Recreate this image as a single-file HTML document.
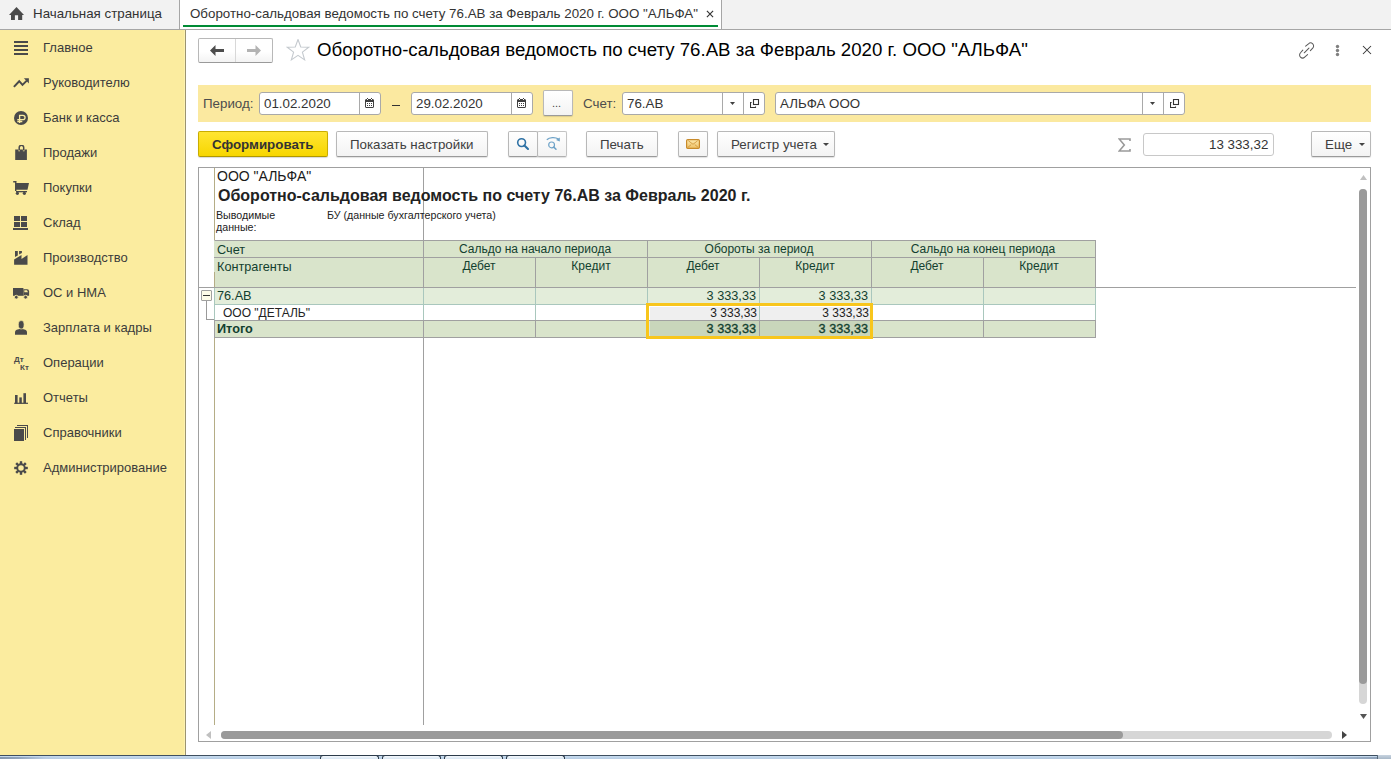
<!DOCTYPE html>
<html><head><meta charset="utf-8">
<style>
*{box-sizing:border-box;margin:0;padding:0}
html,body{width:1391px;height:759px;overflow:hidden;background:#fff;font-family:"Liberation Sans",sans-serif;color:#333}
.a{position:absolute}
.t{position:absolute;white-space:pre;line-height:15px}
/* tabs */
#tabbar{left:0;top:0;width:1391px;height:30px;background:#f2f2f2;border-bottom:1px solid #a6a6a6}
/* sidebar */
#side{left:0;top:30px;width:186px;height:725px;background:#fbec9f;border-right:1px solid #9c9470;box-shadow:inset -1px 0 0 #fdf2b0}
.si{position:absolute;left:43px;font-size:13px;color:#3c3c3c;line-height:15px;white-space:pre}
.ic{position:absolute;left:12px;width:18px;height:18px}
/* buttons */
.btn{position:absolute;height:26px;border:1px solid #b8b8b8;border-bottom-color:#9a9a9a;border-radius:2px;background:linear-gradient(#ffffff,#f3f3f3);box-shadow:0 1px 1px rgba(0,0,0,.12)}
.btxt{position:absolute;font-size:13.33px;color:#404040;white-space:pre;line-height:15px}
.inp{position:absolute;height:23px;border:1px solid #a9a9a9;border-radius:3px;background:#fff}
.sep{position:absolute;top:0;width:1px;height:21px;background:#a9a9a9}
.lbl{position:absolute;font-size:13.33px;color:#4d4d4d;white-space:pre;line-height:15px}
.itx{position:absolute;font-size:13.33px;color:#333;white-space:pre;line-height:15px}
/* report */
.c{position:absolute;font-size:12px;line-height:14px;white-space:pre}
</style></head>
<body>
<!-- TAB BAR -->
<div id="tabbar" class="a"></div>
<svg class="a" style="left:9px;top:6px" width="16" height="15" viewBox="0 0 16 15"><path d="M7.5 0.9 L15 9 H13.2 V14 H9.1 V9.3 H5.9 V14 H2 V9 H0 Z" fill="#4a4a4a"/></svg>
<div class="t" style="left:33px;top:6px;font-size:13.33px;color:#333">Начальная страница</div>
<div class="a" style="left:179px;top:0;width:1px;height:29px;background:#a6a6a6"></div>
<div class="a" style="left:180px;top:0;width:541px;height:29px;background:#fff"></div>
<div class="a" style="left:721px;top:0;width:1px;height:29px;background:#a6a6a6"></div>
<div class="t" style="left:190px;top:6px;font-size:13.33px;color:#333">Оборотно-сальдовая ведомость по счету 76.АВ за Февраль 2020 г. ООО "АЛЬФА"</div>
<svg class="a" style="left:706px;top:10px" width="8" height="8" viewBox="0 0 8 8"><path d="M0.9 0.9 L7.1 7.1 M7.1 0.9 L0.9 7.1" stroke="#333" stroke-width="1.15"/></svg>
<div class="a" style="left:183px;top:25px;width:535px;height:2px;background:#008b35"></div>

<!-- SIDEBAR -->
<div id="side" class="a"></div>
<!-- icons -->
<svg class="a" style="left:14px;top:41px" width="14" height="14"><rect x="0" y="0" width="14" height="2" fill="#4a4a4a"/><rect x="0" y="4" width="14" height="2" fill="#4a4a4a"/><rect x="0" y="8" width="14" height="2" fill="#4a4a4a"/><rect x="0" y="12" width="14" height="2" fill="#4a4a4a"/></svg>
<svg class="a" style="left:13px;top:77px" width="17" height="11" viewBox="0 0 17 11"><path d="M0.9 9.9 L6.2 4.2 L9.5 7.9 L13.8 3.6" stroke="#4a4a4a" stroke-width="2" fill="none"/><path d="M10.9 1.2 H15.9 V6.6 Z" fill="#4a4a4a"/></svg>
<svg class="a" style="left:14px;top:111px" width="14" height="14" viewBox="0 0 14 14"><circle cx="7" cy="7" r="7" fill="#4a4a4a"/><path d="M5.6 12 V4.3 H8.9 A2.15 2.15 0 0 1 8.9 8.6 H3.3 M3.3 10.5 H8.3" stroke="#fbec9f" stroke-width="1.3" fill="none"/></svg>
<svg class="a" style="left:15px;top:145px" width="13" height="15" viewBox="0 0 13 15"><path d="M4.2 5.5 V2.6 A2.25 2.25 0 0 1 8.7 2.6 V5.5" stroke="#4a4a4a" stroke-width="1.5" fill="none"/><path d="M0.2 4.4 H3.4 V6.2 H5 V4.4 H7.9 V6.2 H9.5 V4.4 H11.9 V15 H0.2 Z" fill="#4a4a4a"/></svg>
<svg class="a" style="left:13px;top:181px" width="17" height="14" viewBox="0 0 17 14"><g fill="#4a4a4a"><rect x="0.2" y="0" width="3" height="1.5"/><rect x="2" y="0" width="1.4" height="10"/><path d="M2 2 H16 L14.5 8.7 H2 Z"/><rect x="3" y="10" width="11" height="1.3"/><circle cx="4.4" cy="12.3" r="1.6"/><circle cx="11.4" cy="12.3" r="1.6"/></g></svg>
<svg class="a" style="left:13px;top:216px" width="15" height="14" shape-rendering="crispEdges"><g fill="#4a4a4a"><rect x="1" y="0" width="6" height="5"/><rect x="8" y="0" width="6" height="5"/><rect x="1" y="6" width="6" height="5"/><rect x="8" y="6" width="6" height="5"/><rect x="0" y="12" width="15" height="2"/></g></svg>
<svg class="a" style="left:14px;top:251px" width="14" height="14" viewBox="0 0 14 14"><g fill="#4a4a4a"><path d="M0.1 13.7 V8.6 L7.5 4.1 V8 L13.5 4.1 V13.7 Z"/><path d="M1 0 H3.8 V4.4 L1 6.1 Z"/><path d="M5.1 0 H7.9 V1.9 L5.1 3.6 Z"/></g></svg>
<svg class="a" style="left:13px;top:287px" width="17" height="13" viewBox="0 0 17 13"><g fill="#4a4a4a"><rect x="0" y="1" width="10.4" height="7.8"/><path d="M10.4 2.3 H14.2 Q16.1 2.3 16.1 4.5 V8.8 H10.4 Z"/></g><path d="M11.3 3.3 H14 L15 5.2 H11.3 Z" fill="#fbec9f"/><circle cx="3.3" cy="10.2" r="1.9" fill="#4a4a4a" stroke="#fbec9f" stroke-width=".9"/><circle cx="12.6" cy="10.2" r="1.9" fill="#4a4a4a" stroke="#fbec9f" stroke-width=".9"/></svg>
<svg class="a" style="left:15px;top:320px" width="12" height="15" viewBox="0 0 12 15"><path d="M0 14.7 V12.2 C0 10 2.6 9 6 9 C9.4 9 12 10 12 12.2 V14.7 Z" fill="#4a4a4a"/><ellipse cx="6.2" cy="4.8" rx="2.9" ry="4.2" fill="#4a4a4a" stroke="#fbec9f" stroke-width=".7"/></svg>
<div class="a" style="left:14px;top:354px;width:16px;height:17px;font-size:8px;line-height:8px;color:#4a4a4a;font-weight:bold"><span style="position:absolute;left:0;top:2px">Дт</span><span style="position:absolute;left:6px;top:10px">Кт</span></div>
<svg class="a" style="left:14px;top:393px" width="14" height="11" viewBox="0 0 14 11"><g fill="#4a4a4a"><rect x="1" y="2" width="2.6" height="8.5"/><rect x="5.3" y="4.4" width="2.5" height="6"/><rect x="9.4" y="0.2" width="2.6" height="10"/><rect x="0.2" y="9.7" width="13.8" height="1.2"/></g></svg>
<svg class="a" style="left:14px;top:425px" width="15" height="17" viewBox="0 0 15 17" shape-rendering="crispEdges"><rect x="0" y="4" width="10" height="12" fill="#4a4a4a"/><path d="M1 2.5 H11.5 V15" stroke="#4a4a4a" stroke-width="1" fill="none"/><path d="M3 0.5 H13.5 V13" stroke="#4a4a4a" stroke-width="1" fill="none"/></svg>
<svg class="a" style="left:14px;top:461px" width="14" height="14" viewBox="0 0 14 14"><g fill="#4a4a4a"><rect x="5.8" y="0.2" width="2.4" height="2.8" transform="rotate(0 7 7)"/><rect x="5.8" y="0.2" width="2.4" height="2.8" transform="rotate(45 7 7)"/><rect x="5.8" y="0.2" width="2.4" height="2.8" transform="rotate(90 7 7)"/><rect x="5.8" y="0.2" width="2.4" height="2.8" transform="rotate(135 7 7)"/><rect x="5.8" y="0.2" width="2.4" height="2.8" transform="rotate(180 7 7)"/><rect x="5.8" y="0.2" width="2.4" height="2.8" transform="rotate(225 7 7)"/><rect x="5.8" y="0.2" width="2.4" height="2.8" transform="rotate(270 7 7)"/><rect x="5.8" y="0.2" width="2.4" height="2.8" transform="rotate(315 7 7)"/></g><circle cx="7" cy="7" r="3.75" stroke="#4a4a4a" stroke-width="1.9" fill="none"/></svg>
<div class="si" style="top:40px">Главное</div>
<div class="si" style="top:75px">Руководителю</div>
<div class="si" style="top:110px">Банк и касса</div>
<div class="si" style="top:145px">Продажи</div>
<div class="si" style="top:180px">Покупки</div>
<div class="si" style="top:215px">Склад</div>
<div class="si" style="top:250px">Производство</div>
<div class="si" style="top:285px">ОС и НМА</div>
<div class="si" style="top:320px">Зарплата и кадры</div>
<div class="si" style="top:355px">Операции</div>
<div class="si" style="top:390px">Отчеты</div>
<div class="si" style="top:425px">Справочники</div>
<div class="si" style="top:460px">Администрирование</div>

<!-- TASKBAR -->
<div class="a" style="left:0;top:755px;width:1391px;height:4px;background:linear-gradient(#3e4f60 0,#3e4f60 1px,#c8dcef 1px,#b4cbe3 4px)"></div>
<div class="a" style="left:0;top:757px;width:60px;height:2px;background:linear-gradient(to right,#8396ae 0,#8fa3bb 18px,#b8cce4 45px,rgba(184,204,228,0) 60px)"></div>
<div class="a" style="left:1290px;top:757px;width:87px;height:2px;background:linear-gradient(to right,rgba(140,160,185,0),#8ea2ba)"></div>

<div class="a" style="left:320px;top:755px;width:59px;height:4px;border:1px solid #2c3b4a;border-bottom:none;border-radius:3px 3px 0 0;background:linear-gradient(#f4f8fc,#d8e6f3)"></div>
<div class="a" style="left:382px;top:755px;width:59px;height:4px;border:1px solid #2c3b4a;border-bottom:none;border-radius:3px 3px 0 0;background:linear-gradient(#f4f8fc,#d8e6f3)"></div>
<div class="a" style="left:444px;top:755px;width:59px;height:4px;border:1px solid #2c3b4a;border-bottom:none;border-radius:3px 3px 0 0;background:linear-gradient(#f4f8fc,#d8e6f3)"></div>
<div class="a" style="left:506px;top:755px;width:59px;height:4px;border:1px solid #2c3b4a;border-bottom:none;border-radius:3px 3px 0 0;background:linear-gradient(#f4f8fc,#d8e6f3)"></div>
<div class="a" style="left:1377px;top:755px;width:14px;height:4px;border-left:1px solid #56687a;background:linear-gradient(#c8d4e0,#a8b8c8)"></div>
<!-- TITLE ROW -->
<div class="a" style="left:198px;top:38px;width:75px;height:25px;border:1px solid #b8b8b8;border-bottom-color:#9a9a9a;border-radius:2px;background:linear-gradient(#fff 55%,#f3f3f3)"></div>
<div class="a" style="left:235px;top:39px;width:1px;height:23px;background:#d8d8d8"></div>
<svg class="a" style="left:210px;top:45px" width="15" height="11" viewBox="0 0 15 11"><path d="M0 5.5 L5.5 0 V4 H14 V7 H5.5 V11 Z" fill="#4d4d4d"/></svg>
<svg class="a" style="left:247px;top:45px" width="15" height="11" viewBox="0 0 15 11"><path d="M14 5.5 L8.5 0 V4 H0 V7 H8.5 V11 Z" fill="#b3b3b3"/></svg>
<svg class="a" style="left:286px;top:39px" width="24" height="22" viewBox="0.5 0.5 24 22.5"><path d="M12.5 1 L15.3 8.6 L23.5 8.9 L17 13.9 L19.3 21.8 L12.5 17.2 L5.7 21.8 L8 13.9 L1.5 8.9 L9.7 8.6 Z" fill="#fff" stroke="#c4c9ce" stroke-width="1.1"/></svg>
<div class="t" style="left:317px;top:40px;font-size:18.67px;line-height:20px;color:#000">Оборотно-сальдовая ведомость по счету 76.АВ за Февраль 2020 г. ООО "АЛЬФА"</div>
<svg class="a" style="left:1298px;top:42px" width="17" height="17" viewBox="-0.6 -0.4 18 18"><g stroke="#5a5a5a" stroke-width="1.1" fill="none" stroke-linecap="round"><path d="M7.5 4 L10.5 1.5 A2.8 2.8 0 0 1 15 6 L12.5 8.8"/><path d="M9.5 13 L6.5 15.5 A2.8 2.8 0 0 1 2 11 L4.5 8.2"/><path d="M6 11 L11 6"/></g></svg>
<svg class="a" style="left:1335px;top:44px" width="5" height="13"><circle cx="2.5" cy="2.5" r="1.7" fill="#808080"/><circle cx="2.5" cy="6.5" r="1.7" fill="#808080"/><circle cx="2.5" cy="10.5" r="1.7" fill="#808080"/></svg>
<svg class="a" style="left:1362px;top:45px" width="10" height="10" viewBox="0 0 10 10"><path d="M1 1 L9 9 M9 1 L1 9" stroke="#333" stroke-width="1.05"/></svg>

<!-- FILTER PANEL -->
<div class="a" style="left:198px;top:85px;width:1173px;height:37px;background:#fbe9a0"></div>
<div class="lbl" style="left:203px;top:96px">Период:</div>
<div class="inp" style="left:259px;top:92px;width:122px"><div class="sep" style="left:99px"></div></div>
<div class="itx" style="left:264px;top:96px">01.02.2020</div>
<svg class="a" style="left:365px;top:98px" width="9" height="10" shape-rendering="crispEdges"><g fill="#404040"><rect x="2" y="0" width="1" height="1"/><rect x="6" y="0" width="1" height="1"/><rect x="1" y="1" width="7" height="3"/><rect x="0" y="2" width="1" height="7"/><rect x="8" y="2" width="1" height="7"/><rect x="1" y="9" width="7" height="1"/><rect x="2" y="5" width="1" height="1"/><rect x="4" y="5" width="1" height="1"/><rect x="6" y="5" width="1" height="1"/><rect x="2" y="7" width="1" height="1"/><rect x="4" y="7" width="1" height="1"/><rect x="6" y="7" width="1" height="1"/></g><rect x="2" y="1" width="1" height="1" fill="#fff"/><rect x="6" y="1" width="1" height="1" fill="#fff"/><g fill="#404040" opacity=".5"><rect x="0" y="1" width="1" height="1"/><rect x="8" y="1" width="1" height="1"/><rect x="0" y="9" width="1" height="1"/><rect x="8" y="9" width="1" height="1"/></g></svg>
<div class="a" style="left:392px;top:105px;width:8px;height:1px;background:#333"></div>
<div class="inp" style="left:411px;top:92px;width:122px"><div class="sep" style="left:99px"></div></div>
<div class="itx" style="left:416px;top:96px">29.02.2020</div>
<svg class="a" style="left:517px;top:98px" width="9" height="10" shape-rendering="crispEdges"><g fill="#404040"><rect x="2" y="0" width="1" height="1"/><rect x="6" y="0" width="1" height="1"/><rect x="1" y="1" width="7" height="3"/><rect x="0" y="2" width="1" height="7"/><rect x="8" y="2" width="1" height="7"/><rect x="1" y="9" width="7" height="1"/><rect x="2" y="5" width="1" height="1"/><rect x="4" y="5" width="1" height="1"/><rect x="6" y="5" width="1" height="1"/><rect x="2" y="7" width="1" height="1"/><rect x="4" y="7" width="1" height="1"/><rect x="6" y="7" width="1" height="1"/></g><rect x="2" y="1" width="1" height="1" fill="#fff"/><rect x="6" y="1" width="1" height="1" fill="#fff"/><g fill="#404040" opacity=".5"><rect x="0" y="1" width="1" height="1"/><rect x="8" y="1" width="1" height="1"/><rect x="0" y="9" width="1" height="1"/><rect x="8" y="9" width="1" height="1"/></g></svg>
<div class="btn" style="left:543px;top:90px;width:30px"></div>
<div class="t" style="left:552px;top:96px;font-size:11px;color:#444">...</div>
<div class="lbl" style="left:583px;top:96px">Счет:</div>
<div class="inp" style="left:622px;top:92px;width:143px"><div class="sep" style="left:99px"></div><div class="sep" style="left:120px"></div></div>
<div class="itx" style="left:627px;top:96px">76.АВ</div>
<svg class="a" style="left:730px;top:102px" width="5" height="3"><path d="M0 0 H5 L2.5 3 Z" fill="#404040"/></svg>
<svg class="a" style="left:750px;top:99px" width="10" height="10"><g stroke="#333" stroke-width="1.1" fill="none"><rect x="3.5" y="0.5" width="5" height="5"/><path d="M1.6 3.5 H0.5 V8.5 H5.5 V7.4"/></g></svg>
<div class="inp" style="left:775px;top:92px;width:410px"><div class="sep" style="left:366px"></div><div class="sep" style="left:387px"></div></div>
<div class="itx" style="left:780px;top:96px">АЛЬФА ООО</div>
<svg class="a" style="left:1150px;top:102px" width="5" height="3"><path d="M0 0 H5 L2.5 3 Z" fill="#404040"/></svg>
<svg class="a" style="left:1170px;top:99px" width="10" height="10"><g stroke="#333" stroke-width="1.1" fill="none"><rect x="3.5" y="0.5" width="5" height="5"/><path d="M1.6 3.5 H0.5 V8.5 H5.5 V7.4"/></g></svg>

<!-- TOOLBAR -->
<div class="a" style="left:198px;top:131px;width:130px;height:26px;border:1px solid #c9ad00;border-bottom-color:#b09800;border-radius:2px;background:linear-gradient(#ffe533,#f7d600);box-shadow:0 1px 1px rgba(0,0,0,.15)"></div>
<div class="btxt" style="left:212px;top:137px;font-weight:bold;color:#333">Сформировать</div>
<div class="btn" style="left:336px;top:131px;width:152px"></div>
<div class="btxt" style="left:350px;top:137px">Показать настройки</div>
<div class="btn" style="left:537px;top:131px;width:30px;border-color:#c4c4c4;border-bottom-color:#b0b0b0"></div>
<div class="btn" style="left:508px;top:131px;width:30px"></div>
<svg class="a" style="left:515px;top:137px" width="15" height="14" viewBox="0 0 15 14"><circle cx="6.6" cy="5.6" r="3.9" stroke="#2f72a5" stroke-width="1.6" fill="none"/><path d="M9.4 8.5 L13 12" stroke="#2f72a5" stroke-width="2.1" stroke-linecap="round"/></svg>
<svg class="a" style="left:546px;top:136px" width="17" height="16" viewBox="0 0 17 16"><path d="M0.8 3.8 C3.5 1.2 9 0.8 12.5 3" stroke="#6fa3c8" stroke-width="1.3" fill="none"/><path d="M10 4 L13.8 1.5 L13.8 5.5 Z" fill="#6fa3c8"/><circle cx="5.6" cy="8.9" r="2.9" stroke="#6fa3c8" stroke-width="1.2" fill="none"/><path d="M7.8 11.1 L10 13.3" stroke="#6fa3c8" stroke-width="1.5" stroke-linecap="round"/></svg>
<div class="btn" style="left:586px;top:131px;width:72px"></div>
<div class="btxt" style="left:600px;top:137px">Печать</div>
<div class="btn" style="left:678px;top:131px;width:30px"></div>
<svg class="a" style="left:686px;top:139px" width="14" height="10" viewBox="0 0 14 10"><defs><linearGradient id="mg" x1="0" y1="0" x2="0" y2="1"><stop offset="0" stop-color="#fdeab0"/><stop offset="1" stop-color="#eec064"/></linearGradient></defs><rect x="0.6" y="0.6" width="12.8" height="8.8" rx="1.2" fill="url(#mg)" stroke="#c88a2a" stroke-width="1.2"/><path d="M2.2 1.6 L7 5.3 L11.8 1.6 M1.6 8.6 L5.2 5.6 M12.4 8.6 L8.8 5.6" stroke="#d29a40" stroke-width="0.9" fill="none"/></svg>
<div class="btn" style="left:717px;top:131px;width:118px"></div>
<div class="btxt" style="left:731px;top:137px">Регистр учета</div>
<svg class="a" style="left:823px;top:143px" width="6" height="3"><path d="M0 0 H6 L3 3 Z" fill="#444"/></svg>
<svg class="a" style="left:1118px;top:138px" width="13" height="14" viewBox="0 0 13 14"><path d="M12 3 V1 H1.2 L6.3 7 L1.2 13 H12 V11" stroke="#9a9a9a" stroke-width="1.6" fill="none" stroke-linejoin="miter"/></svg>
<div class="a" style="left:1143px;top:133px;width:131px;height:23px;border:1px solid #c8c8c8;border-radius:3px;background:#fff"></div>
<div class="itx" style="left:1209px;top:137px">13 333,32</div>
<div class="btn" style="left:1311px;top:131px;width:60px"></div>
<div class="btxt" style="left:1325px;top:137px">Еще</div>
<svg class="a" style="left:1359px;top:143px" width="6" height="3"><path d="M0 0 H6 L3 3 Z" fill="#444"/></svg>

<!-- REPORT FRAME -->
<div class="a" style="left:198px;top:167px;width:1173px;height:575px;border:1px solid #a0a0a0;background:#fff"></div>

<!-- report content -->
<div class="a" style="left:214px;top:168px;width:1px;height:557px;background:#b5ad86"></div>
<div class="a" style="left:423px;top:168px;width:1px;height:557px;background:#a0a0a0"></div>
<div class="t" style="left:217px;top:168px;font-size:14px;line-height:16px;color:#1a1a1a">ООО "АЛЬФА"</div>
<div class="t" style="left:218px;top:187px;font-size:16px;line-height:18px;color:#222;font-weight:bold">Оборотно-сальдовая ведомость по счету 76.АВ за Февраль 2020 г.</div>
<div class="t" style="left:216px;top:209px;font-size:10.67px;line-height:12px;color:#222">Выводимые</div>
<div class="t" style="left:216px;top:221px;font-size:10.67px;line-height:12px;color:#222">данные:</div>
<div class="t" style="left:327px;top:209px;font-size:10.67px;line-height:12px;color:#222">БУ (данные бухгалтерского учета)</div>
<!-- header bg -->
<div class="a" style="left:214px;top:240px;width:882px;height:48px;background:#d9e4cb;border:1px solid #a0a0a0;border-left-color:#d9e4cb"></div>
<div class="a" style="left:214px;top:272px;width:1px;height:15px;background:#b5ad86"></div>
<div class="a" style="left:214px;top:257px;width:882px;height:1px;background:#a0a0a0"></div>
<div class="a" style="left:199px;top:287px;width:1157px;height:1px;background:#a0a0a0"></div>
<div class="a" style="left:423px;top:240px;width:1px;height:48px;background:#a0a0a0"></div>
<div class="a" style="left:647px;top:240px;width:1px;height:48px;background:#a0a0a0"></div>
<div class="a" style="left:871px;top:240px;width:1px;height:48px;background:#a0a0a0"></div>
<div class="a" style="left:535px;top:257px;width:1px;height:31px;background:#a0a0a0"></div>
<div class="a" style="left:759px;top:257px;width:1px;height:31px;background:#a0a0a0"></div>
<div class="a" style="left:983px;top:257px;width:1px;height:31px;background:#a0a0a0"></div>
<div class="c" style="left:217px;top:243px;font-size:12.7px;color:#12402f">Счет</div>
<div class="c" style="left:217px;top:260px;font-size:12.7px;color:#12402f">Контрагенты</div>
<div class="c" style="left:423px;top:242px;width:224px;text-align:center;color:#12402f">Сальдо на начало периода</div>
<div class="c" style="left:647px;top:242px;width:224px;text-align:center;color:#12402f">Обороты за период</div>
<div class="c" style="left:871px;top:242px;width:224px;text-align:center;color:#12402f">Сальдо на конец периода</div>
<div class="c" style="left:423px;top:259px;width:112px;text-align:center;color:#12402f">Дебет</div>
<div class="c" style="left:535px;top:259px;width:112px;text-align:center;color:#12402f">Кредит</div>
<div class="c" style="left:647px;top:259px;width:112px;text-align:center;color:#12402f">Дебет</div>
<div class="c" style="left:759px;top:259px;width:112px;text-align:center;color:#12402f">Кредит</div>
<div class="c" style="left:871px;top:259px;width:112px;text-align:center;color:#12402f">Дебет</div>
<div class="c" style="left:983px;top:259px;width:112px;text-align:center;color:#12402f">Кредит</div>

<div class="a" style="left:214px;top:288px;width:882px;height:16px;background:#e3edda"></div>
<div class="a" style="left:214px;top:304px;width:882px;height:1px;background:#a9c7bd"></div>
<div class="a" style="left:215px;top:305px;width:880px;height:15px;background:#fff"></div>
<div class="a" style="left:214px;top:320px;width:882px;height:1px;background:#a0a0a0"></div>
<div class="a" style="left:214px;top:321px;width:882px;height:16px;background:#d9e4cb"></div>
<div class="a" style="left:214px;top:337px;width:882px;height:1px;background:#a0a0a0"></div>
<div class="a" style="left:1095px;top:288px;width:1px;height:32px;background:#a9c7bd"></div>
<div class="a" style="left:1095px;top:321px;width:1px;height:17px;background:#a0a0a0"></div>
<div class="a" style="left:214px;top:288px;width:1px;height:32px;background:#a9c7bd"></div>
<div class="a" style="left:214px;top:321px;width:1px;height:17px;background:#a0a0a0"></div>
<div class="a" style="left:423px;top:288px;width:1px;height:32px;background:#a9c7bd"></div>
<div class="a" style="left:423px;top:321px;width:1px;height:16px;background:#a0a0a0"></div>
<div class="a" style="left:535px;top:288px;width:1px;height:32px;background:#a9c7bd"></div>
<div class="a" style="left:535px;top:321px;width:1px;height:16px;background:#a0a0a0"></div>
<div class="a" style="left:647px;top:288px;width:1px;height:32px;background:#a9c7bd"></div>
<div class="a" style="left:647px;top:321px;width:1px;height:16px;background:#a0a0a0"></div>
<div class="a" style="left:759px;top:288px;width:1px;height:32px;background:#a9c7bd"></div>
<div class="a" style="left:759px;top:321px;width:1px;height:16px;background:#a0a0a0"></div>
<div class="a" style="left:871px;top:288px;width:1px;height:32px;background:#a9c7bd"></div>
<div class="a" style="left:871px;top:321px;width:1px;height:16px;background:#a0a0a0"></div>
<div class="a" style="left:983px;top:288px;width:1px;height:32px;background:#a9c7bd"></div>
<div class="a" style="left:983px;top:321px;width:1px;height:16px;background:#a0a0a0"></div>

<div class="a" style="left:649px;top:306px;width:221px;height:14px;background:#efefef;border-top:1px solid #fff;border-left:1px solid #fff"></div>
<div class="a" style="left:649px;top:321px;width:221px;height:15px;background:#c9d6bb;border-left:1px solid #d8e6e0"></div>
<div class="a" style="left:646px;top:303px;width:227px;height:36px;border:3px solid #f8c61c"></div>
<div class="a" style="left:759px;top:306px;width:1px;height:14px;background:#a9c7bd"></div>
<div class="a" style="left:759px;top:321px;width:1px;height:15px;background:#a0a0a0"></div>

<div class="a" style="left:201px;top:290px;width:11px;height:11px;border:1px solid #a0a0a0;border-radius:1px;background:#fdfbe8"></div>
<div class="a" style="left:203px;top:295px;width:7px;height:1px;background:#333"></div>
<div class="a" style="left:206px;top:301px;width:1px;height:19px;background:#9a9a9a"></div>
<div class="a" style="left:206px;top:319px;width:8px;height:1px;background:#9a9a9a"></div>
<div class="c" style="left:217px;top:289px;font-size:12.7px;color:#12402f">76.АВ</div>
<div class="c" style="left:223px;top:306px;color:#222">ООО "ДЕТАЛЬ"</div>
<div class="c" style="left:217px;top:322px;font-size:12.7px;color:#12402f;font-weight:bold">Итого</div>
<div class="c" style="left:647px;top:289px;width:109px;text-align:right;font-size:12.7px;color:#12402f">3 333,33</div>
<div class="c" style="left:647px;top:306px;width:110px;text-align:right;color:#222">3 333,33</div>
<div class="c" style="left:647px;top:322px;width:109px;text-align:right;font-size:12.7px;color:#12402f;-webkit-text-stroke:0.35px #12402f">3 333,33</div>
<div class="c" style="left:759px;top:289px;width:109px;text-align:right;font-size:12.7px;color:#12402f">3 333,33</div>
<div class="c" style="left:759px;top:306px;width:110px;text-align:right;color:#222">3 333,33</div>
<div class="c" style="left:759px;top:322px;width:109px;text-align:right;font-size:12.7px;color:#12402f;-webkit-text-stroke:0.35px #12402f">3 333,33</div>

<svg class="a" style="left:1360px;top:175px" width="7" height="5"><path d="M0 5 L3.5 0 L7 5 Z" fill="#c0c0c0"/></svg>
<div class="a" style="left:1359px;top:189px;width:8px;height:515px;border-radius:4px;background:#d6d6d6"></div>
<div class="a" style="left:1359px;top:189px;width:8px;height:495px;border-radius:4px;background:#9a9a9a"></div>
<svg class="a" style="left:1360px;top:714px" width="7" height="5"><path d="M0 0 L7 0 L3.5 5 Z" fill="#555"/></svg>
<svg class="a" style="left:206px;top:731px" width="5" height="8"><path d="M5 0 V8 L0 4 Z" fill="#c0c0c0"/></svg>
<div class="a" style="left:221px;top:731px;width:1111px;height:8px;border-radius:4px;background:#d6d6d6"></div>
<div class="a" style="left:221px;top:731px;width:902px;height:8px;border-radius:4px;background:#9a9a9a"></div>
<svg class="a" style="left:1342px;top:731px" width="5" height="8"><path d="M0 0 V8 L5 4 Z" fill="#444"/></svg>

</body></html>
